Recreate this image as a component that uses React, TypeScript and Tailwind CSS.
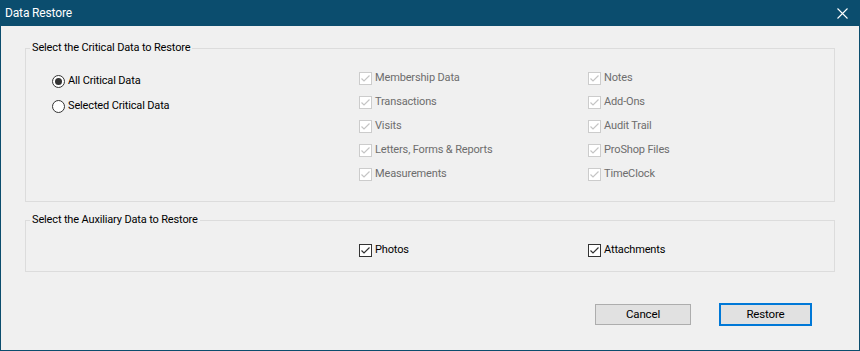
import { type ReactNode } from "react";

const font = { fontFamily: 'Roboto, "Liberation Sans", Arial, sans-serif' };

function Check({ label, disabled }: { label: string; disabled?: boolean }) {
  return (
    <div className="flex h-6 items-center">
      <span
        className={
          "flex h-[13px] w-[13px] items-center justify-center border bg-white " +
          (disabled ? "border-[#cccccc] bg-[#f0f0f0]" : "border-[#333333]")
        }
      >
        <svg width="11" height="11" viewBox="0 0 11 11">
          <path
            d="M1.5 5.5 L4 8 L9.5 2.5"
            fill="none"
            stroke={disabled ? "#c4c4c4" : "#333333"}
            strokeWidth="1.2"
          />
        </svg>
      </span>
      <span className={"ml-[3px] " + (disabled ? "text-[#6d6d6d]" : "text-black")}>
        {label}
      </span>
    </div>
  );
}

function Radio({ label, checked }: { label: string; checked?: boolean }) {
  return (
    <div className="flex h-6 items-center">
      <span className="flex h-[13px] w-[13px] items-center justify-center rounded-full border border-[#333333] bg-white">
        {checked && <span className="h-[7px] w-[7px] rounded-full bg-[#333333]" />}
      </span>
      <span className="ml-[3px]">{label}</span>
    </div>
  );
}

function Group({ title, children, className }: { title: string; children: ReactNode; className?: string }) {
  return (
    <fieldset className={"mx-[24px] rounded-none border border-[#dcdcdc] px-[26px] " + (className ?? "")}>
      <legend className="ml-[-22px] px-[2px] leading-[16px]">{title}</legend>
      {children}
    </fieldset>
  );
}

export default function App() {
  const left = ["Membership Data", "Transactions", "Visits", "Letters, Forms & Reports", "Measurements"];
  const right = ["Notes", "Add-Ons", "Audit Trail", "ProShop Files", "TimeClock"];

  return (
    <div
      className="flex h-[351px] w-[860px] flex-col border border-t-0 border-[#0b4d6e] bg-[#f0f0f0] text-[11px] tracking-[-0.15px] text-black"
      style={font}
    >
      <div className="flex h-[26px] shrink-0 items-center justify-between bg-[#0b4d6e] pl-[4px] pr-[11px] text-white">
        <span className="text-[12px]">Data Restore</span>
        <svg width="11" height="11" viewBox="0 0 11 11">
          <path d="M0.5 0.5 L10.5 10.5 M10.5 0.5 L0.5 10.5" stroke="white" strokeWidth="1.1" />
        </svg>
      </div>

      <Group title="Select the Critical Data to Restore" className="mt-[14px] h-[162px]">
        <div className="flex">
          <div className="w-[307px] pt-[13px]">
            <Radio label="All Critical Data" checked />
            <div className="mt-[1px]" />
            <Radio label="Selected Critical Data" />
          </div>
          <div className="w-[229px] pt-[10px]">
            {left.map((l) => (
              <Check key={l} label={l} disabled />
            ))}
          </div>
          <div className="pt-[10px]">
            {right.map((l) => (
              <Check key={l} label={l} disabled />
            ))}
          </div>
        </div>
      </Group>

      <Group title="Select the Auxiliary Data to Restore" className="mt-[10px] h-[60px]">
        <div className="flex pl-[307px] pt-[10px]">
          <div className="w-[229px]">
            <Check label="Photos" />
          </div>
          <Check label="Attachments" />
        </div>
      </Group>

      <div className="mt-[32px] flex justify-end gap-[28px] pr-[47px]">
        <button className="h-[21px] w-[96px] border border-[#adadad] bg-[#e1e1e1] text-[11.5px]">Cancel</button>
        <button className="mt-[-1px] h-[23px] w-[93px] border-2 border-[#0078d7] bg-[#e1e1e1] text-[11.5px]">
          Restore
        </button>
      </div>
    </div>
  );
}
